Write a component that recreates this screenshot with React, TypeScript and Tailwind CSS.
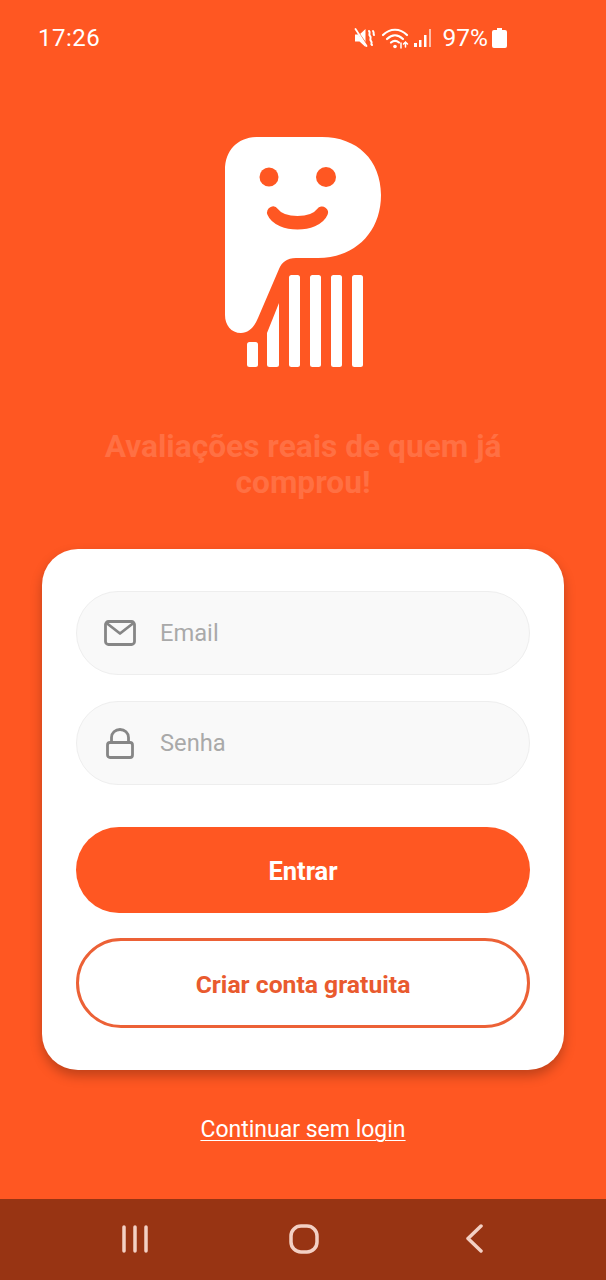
import React from 'react'

const roboto = "font-['Roboto',sans-serif]"

function StatusBar() {
  return (
    <div className="h-[76px] pl-[38px] pr-[99px] flex items-center justify-between text-white">
      <span className="text-[24px] tracking-[0.5px]">17:26</span>
      <div className="flex items-center">
        <svg width="22" height="22" viewBox="0 0 22 22" fill="none" className="mr-[5px]">
          <path d="M1 7.500h4.500l6-5.500v18l-6-5.500H1z" fill="#fff" />
          <path d="M1 1l13 19" stroke="#ff5722" strokeWidth="2" />
          <path d="M1.500 2l11 17" stroke="#fff" strokeWidth="1.800" strokeLinecap="round" />
          <path d="M15 4c2 2-1 3 1 5s-1 3 1 5-1 3 1 4M19 4c1.500 2 0 3 1 4" stroke="#fff" strokeWidth="2" strokeLinecap="round" />
        </svg>
        <svg width="32" height="24" viewBox="0 0 32 24" fill="none" stroke="#fff" strokeWidth="2.200" strokeLinecap="round">
          <path d="M2 9c7-7 17-7 24 0" />
          <path d="M6 13c5-5 11-5 16 0" />
          <path d="M10 16.500c3-2.500 5-2.500 8 0" />
          <circle cx="14" cy="20.500" r="1.800" fill="#fff" stroke="none" />
          <path d="M20 22v-5M24.500 21v-5M22.500 18l2-2 2 2" strokeWidth="1.500" />
        </svg>
        <svg width="22" height="24" viewBox="0 0 22 24" className="mr-[8px]">
          <rect x="1" y="17" width="3" height="4" fill="#fff" />
          <rect x="6" y="14" width="2.500" height="7" fill="#fff" />
          <rect x="11" y="9" width="2.500" height="12" fill="#fff" />
          <rect x="16" y="3" width="2" height="18" fill="#fff" opacity="0.6" />
        </svg>
        <span className="text-[24.500px]">97%</span>
        <svg width="15" height="22" viewBox="0 0 15 22" className="ml-[4px]">
          <path d="M5 1h5v2h3a2 2 0 0 1 2 2v14a2 2 0 0 1-2 2H2a2 2 0 0 1-2-2V5a2 2 0 0 1 2-2h3z" fill="#fff" />
        </svg>
      </div>
    </div>
  )
}

function Logo() {
  return (
    <svg width="160" height="235" viewBox="224 135 160 235" className="block">
      <path
        d="M258 137H322C357 137 381 160 381 195C381 232 355 258 318 258H296C287 258 282 262 279 269L258 318C254 328 248 333 241 333C231 333 225 325 225 315V170C225 150 238 137 258 137Z"
        fill="#fff"
      />
      <circle cx="269" cy="177" r="9.500" fill="#ff5722" />
      <circle cx="326" cy="177" r="10" fill="#ff5722" />
      <path d="M273 212.500C282 225 313 225 322 212.500C316 227 279 227 273 212.500Z" fill="#ff5722" stroke="#ff5722" strokeWidth="12" strokeLinejoin="round" />
      <rect x="247" y="342" width="11" height="25" rx="2.500" fill="#fff" />
      <path d="M267 333L279 303V364.500a2.500 2.500 0 0 1-2.500 2.500H269.500a2.500 2.500 0 0 1-2.500-2.500Z" fill="#fff" />
      <rect x="289" y="275" width="11" height="92" rx="2.500" fill="#fff" />
      <rect x="310" y="275" width="11" height="92" rx="2.500" fill="#fff" />
      <rect x="331" y="275" width="11" height="92" rx="2.500" fill="#fff" />
      <rect x="352" y="275" width="11" height="92" rx="2.500" fill="#fff" />
    </svg>
  )
}

function MailIcon() {
  return (
    <svg width="32" height="26" viewBox="0 0 32 26" fill="none" stroke="currentColor" strokeWidth="2.800" strokeLinejoin="round">
      <rect x="1.500" y="1.500" width="29" height="23" rx="3" />
      <path d="M2.500 3L16 13.500 29.500 3" />
    </svg>
  )
}

function LockIcon() {
  return (
    <svg width="28" height="31" viewBox="0 0 28 31" fill="none" stroke="currentColor" strokeWidth="2.800" strokeLinejoin="round">
      <rect x="1.500" y="14.500" width="25" height="15" rx="2.500" />
      <path d="M5.500 14.500V9.500a8.500 8 0 0 1 17 0v5" />
    </svg>
  )
}

function Field({ icon, label }: { icon: React.ReactNode; label: string }) {
  return (
    <div className="h-[84px] rounded-[42px] bg-[#f9f9f9] border border-[#eeeeee] flex items-center pl-[26px]">
      <div className="w-[34px] flex justify-center text-[#868686]">{icon}</div>
      <span className="ml-[23px] mt-[2px] text-[23.700px] text-[#a9a9a9]">{label}</span>
    </div>
  )
}

export default function App() {
  return (
    <div className={`${roboto} w-[606px] h-[1280px] bg-[#ff5722] flex flex-col overflow-hidden`}>
      <StatusBar />
      <div className="flex justify-center mt-[59px] ml-[2px]">
        <Logo />
      </div>
      <h1 className="mt-[59px] text-center text-[31.700px] leading-[36px] font-bold text-[#ff7043] px-[90px]">
        Avaliações reais de quem já comprou!
      </h1>
      <div className="mt-[48px] mx-[42px] h-[521px] rounded-[36px] bg-white shadow-[0_6px_12px_rgba(0,0,0,0.25)] pt-[42px] px-[34px]">
        <Field icon={<MailIcon />} label="Email" />
        <div className="mt-[26px]">
          <Field icon={<LockIcon />} label="Senha" />
        </div>
        <button className="mt-[42px] w-full h-[86px] rounded-[43px] bg-[#ff5722] text-white text-[25.500px] font-bold pt-[3px]">
          Entrar
        </button>
        <button className="mt-[25px] w-full h-[90px] rounded-[45px] bg-white border-[3px] border-[#ec6136] text-[#e95a2e] text-[24.700px] font-bold pt-[4px]">
          Criar conta gratuita
        </button>
      </div>
      <div className="mt-[43px] text-center">
        <a className="text-[23px] text-white underline decoration-1 underline-offset-[3px]">Continuar sem login</a>
      </div>
      <div className="mt-auto h-[81px] bg-[#983413] flex items-center pl-[122px] pb-[2px]">
        <svg width="26" height="28" viewBox="0 0 26 28" fill="none" stroke="#f3d0c4" strokeWidth="3.500" strokeLinecap="round" className="mr-[141px]">
          <path d="M2 2v24M13 2v24M24 2v24" />
        </svg>
        <svg width="30" height="30" viewBox="0 0 30 30" fill="none" stroke="#f3d0c4" strokeWidth="3.500" className="mr-[147px]">
          <rect x="2" y="2" width="26" height="26" rx="10" />
        </svg>
        <svg width="17" height="29" viewBox="0 0 17 29" fill="none" stroke="#f3d0c4" strokeWidth="3.500" strokeLinecap="round" strokeLinejoin="round">
          <path d="M15 2L2 14.500 15 27" />
        </svg>
      </div>
    </div>
  )
}
